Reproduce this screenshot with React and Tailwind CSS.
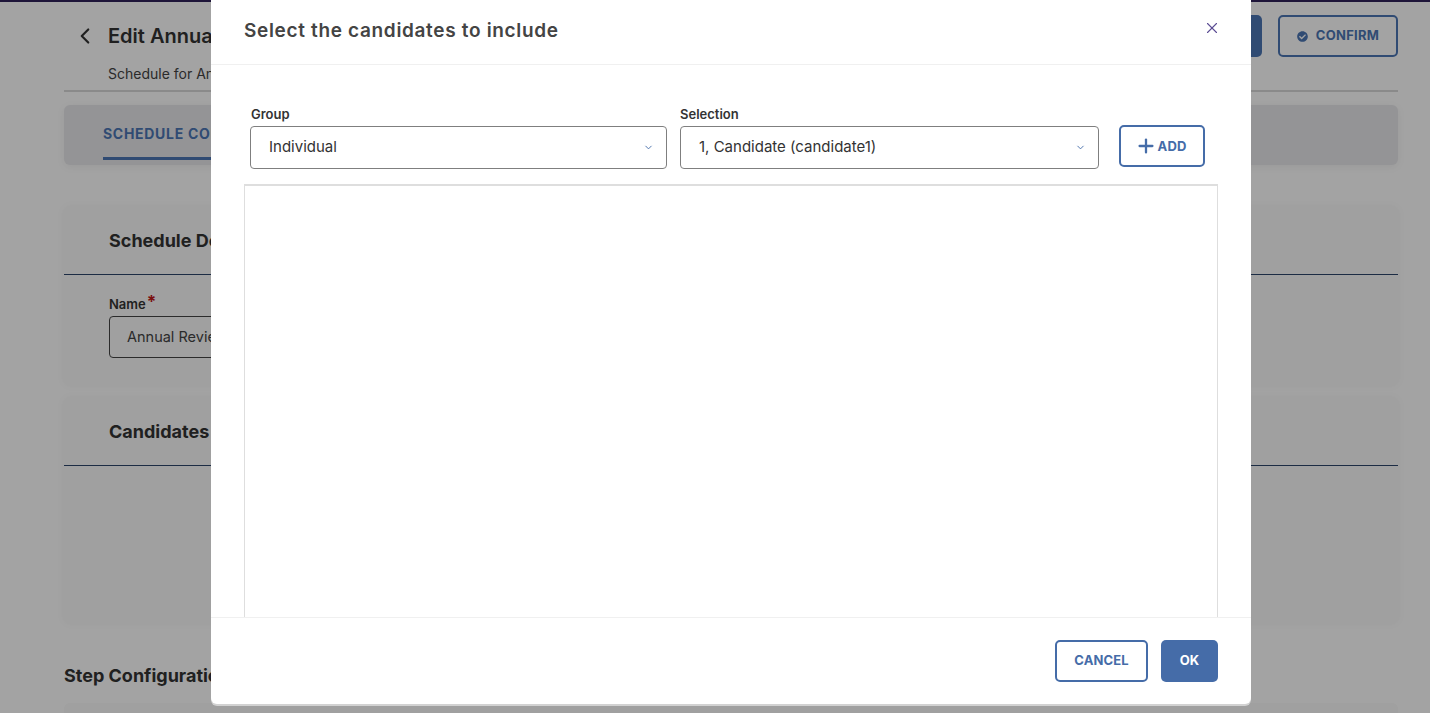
import React from "react";
import { ChevronDown, ChevronLeft, Plus, X } from "lucide-react";
import { FaCheckCircle } from "react-icons/fa";

const font = { fontFamily: "Inter, 'Liberation Sans', sans-serif" };

function FakeSelect({ label, value, width, labelClass = "" }) {
  return (
    <div className={`${width} shrink-0`}>
      <label className={`block h-[20px] text-[13px] leading-[16px] font-semibold text-[#333] ${labelClass}`}>{label}</label>
      <div className="flex h-[43px] items-center justify-between rounded-[4px] border border-[#7f7f7f] pl-[18px] pr-[12px] text-[15px] text-[#333]">
        <span>{value}</span>
        <ChevronDown size={11} strokeWidth={2} className="text-[#456ca8]" />
      </div>
    </div>
  );
}

function Card({ title, height, children }) {
  return (
    <section className={`${height} rounded-[6px] bg-[#fafafa] shadow-[0_0_8px_rgba(0,0,0,0.05)]`}>
      <div className="flex h-[68px] items-center border-b border-[#2c456b] px-[45px] text-[18px] font-bold text-[#333]">
        {title}
      </div>
      {children}
    </section>
  );
}

export default function App() {
  return (
    <div style={font} className="relative h-screen overflow-hidden bg-white">
      {/* Page behind the dialog */}
      <div className="h-[2px] bg-[#30215a]" />
      <div className="pl-[64px] pr-[32px]">
        <header className="flex h-[90px] justify-between border-b-2 border-[#d8d8d8]">
          <div className="flex">
            <ChevronLeft size={26} strokeWidth={2} className="ml-[8px] mt-[21px] text-[#333]" />
            <div className="ml-[10px]">
              <h1 className="mt-[20px] text-[20px] leading-[28px] font-semibold text-[#333]">Edit Annual Review</h1>
              <p className="mt-[15px] text-[14px] leading-[18px] text-[#444]">Schedule for Annual Review</p>
            </div>
          </div>
          <div className="mt-[13px] flex h-[42px] gap-[16px]">
            <button className="w-[120px] rounded-[5px] bg-[#4c76b4] text-[13px] font-bold text-white">SAVE</button>
            <button className="flex w-[120px] items-center justify-center gap-[8px] rounded-[5px] border-2 border-[#4c76b4] text-[13px] font-bold tracking-[0.02em] text-[#4c76b4]">
              <FaCheckCircle size={11} />
              CONFIRM
            </button>
          </div>
        </header>

        <nav className="mt-[13px] h-[60px] rounded-[6px] bg-[#e8e8eb] pl-[39px] shadow-[0_2px_8px_rgba(0,0,0,0.06)]">
          <div className="inline-block h-[55px] border-b-[3px] border-[#4c76b4] pt-[20px] text-[14px] leading-[18px] font-bold tracking-wider text-[#4c76b4]">
            SCHEDULE CONFIGURATION
          </div>
        </nav>

        <div className="mt-[42px] flex flex-col gap-[13px]">
          <Card title="Schedule Details" height="h-[178px]">
            <div className="px-[45px] pt-[21px]">
              <label className="flex h-[20px] text-[13px] leading-[16px] font-semibold text-[#333]">
                Name<span className="ml-px text-[17px] leading-[13px] font-bold text-[#c01818]">*</span>
              </label>
              <div className="flex h-[42px] w-[400px] items-center rounded-[4px] border border-[#444] px-[17px] text-[14.5px] text-[#444]">
                Annual Review
              </div>
            </div>
          </Card>
          <Card title="Candidates" height="h-[225px]" />
        </div>

        <h2 className="mt-[41px] text-[18px] leading-[24px] font-bold text-[#333]">Step Configuration</h2>
        <div className="mt-[15px] h-[60px] rounded-[6px] bg-[#fafafa]" />
      </div>

      {/* Backdrop */}
      <div className="absolute inset-0 bg-black/[0.36]" />

      {/* Dialog */}
      <div className="absolute left-[211px] top-0 flex h-[704px] w-[1040px] flex-col overflow-hidden rounded-b-[6px] bg-white shadow-[0_2px_0_rgba(210,210,210,1)]">
        <div className="flex h-[65px] shrink-0 items-start justify-between border-b border-[#f0f0f0] pl-[33px] pr-[30px]">
          <h2 className="mt-[18px] text-[19px] leading-[26px] font-semibold tracking-[0.035em] text-[#444]">
            Select the candidates to include
          </h2>
          <X size={18} strokeWidth={1.5} className="mt-[19px] text-[#5b4c94]" />
        </div>

        <div className="min-h-0 flex-1 overflow-hidden pl-[33px] pr-[33px] pt-[41px]">
          <div className="flex items-start pl-[6px]">
            <FakeSelect label="Group" value="Individual" width="w-[417px]" labelClass="pl-px" />
            <div className="ml-[13px]">
              <FakeSelect label="Selection" value="1, Candidate (candidate1)" width="w-[419px]" />
            </div>
            <button className="ml-[20px] mt-[19px] flex h-[42px] w-[86px] items-center justify-center gap-[1px] rounded-[5px] border-2 border-[#456ca8] pr-[3px] text-[13px] font-bold tracking-[0.01em] text-[#456ca8]">
              <Plus size={22} strokeWidth={2.5} />
              <span className="mt-[2px]">ADD</span>
            </button>
          </div>
          <div className="mt-[15px] h-[600px] border border-t-2 border-[#dedede]" />
        </div>

        <div className="flex h-[87px] shrink-0 items-start justify-end gap-[13px] border-t border-[#f0f0f0] pr-[33px] pt-[22px]">
          <button className="h-[42px] w-[93px] rounded-[5px] border-2 border-[#456ca8] text-[13px] font-bold tracking-[0.01em] text-[#456ca8]">
            CANCEL
          </button>
          <button className="h-[42px] w-[57px] rounded-[5px] bg-[#456ca8] text-[13px] font-bold tracking-[0.01em] text-white">
            OK
          </button>
        </div>
      </div>
    </div>
  );
}
